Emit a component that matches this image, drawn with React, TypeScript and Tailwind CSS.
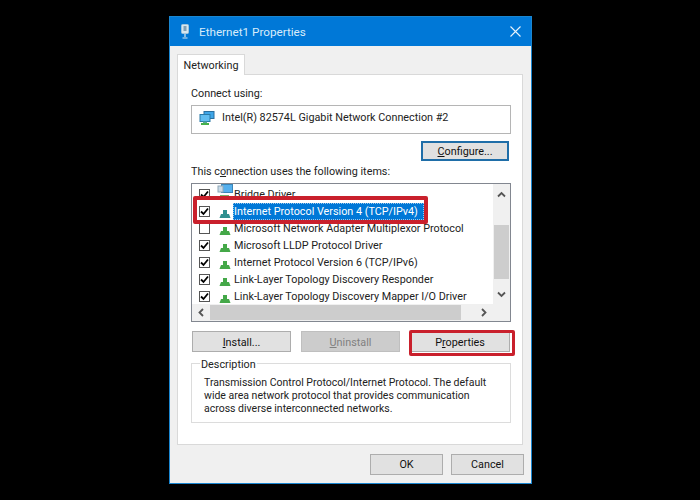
import React from "react";

const items = [
  { label: "Bridge Driver", checked: true, bridge: true },
  { label: "Internet Protocol Version 4 (TCP/IPv4)", checked: true, selected: true },
  { label: "Microsoft Network Adapter Multiplexor Protocol", checked: false },
  { label: "Microsoft LLDP Protocol Driver", checked: true },
  { label: "Internet Protocol Version 6 (TCP/IPv6)", checked: true },
  { label: "Link-Layer Topology Discovery Responder", checked: true },
  { label: "Link-Layer Topology Discovery Mapper I/O Driver", checked: true },
];

function Check({ checked }: { checked: boolean }) {
  return (
    <span className="w-[11px] h-[11px] border border-[#555] bg-white flex items-center justify-center shrink-0">
      {checked && (
        <svg width="9" height="9" viewBox="0 0 9 9">
          <path d="M1 4.5 L3.5 7 L8 1.5" fill="none" stroke="#000" strokeWidth="1.8" />
        </svg>
      )}
    </span>
  );
}

function Monitors() {
  return (
    <svg width="16" height="14" viewBox="0 0 16 14" className="shrink-0">
      <rect x="5" y="0.5" width="10" height="7" fill="#3fa6e8" stroke="#2a6f9f" />
      <rect x="1" y="3.5" width="10" height="7" fill="#62bdf0" stroke="#2a7aa8" />
      <rect x="4" y="10.5" width="4" height="1.5" fill="#5a9" />
      <rect x="2" y="12" width="8" height="2" fill="#46b04a" />
    </svg>
  );
}

function NetIcon({ selected }: { selected?: boolean }) {
  const color = selected ? "#2f8f8f" : "#44a848";
  return (
    <svg width="14" height="17" viewBox="0 0 14 17" className="shrink-0">
      <rect x="5" y="7" width="4" height="4" fill={color} />
      <path d="M1.5 15 L3 11 H11 L12.5 15 Z" fill={color} />
    </svg>
  );
}

function Btn({ children, className = "" }: { children: React.ReactNode; className?: string }) {
  return (
    <div className={`h-[21px] flex items-center justify-center border border-[#adadad] bg-[#e1e1e1] text-[#111] ${className}`}>
      {children}
    </div>
  );
}

function Arrow({ d }: { d: string }) {
  return (
    <svg width="9" height="9" viewBox="0 0 9 9">
      <path d={d} fill="none" stroke="#555" strokeWidth="1.8" />
    </svg>
  );
}

export default function App() {
  return (
    <div className="w-[700px] h-[500px] bg-black pl-[169px] pt-[16px] text-[10.8px] leading-[13px] text-[#222] font-[Roboto,sans-serif]">
      <div className="w-[363px] h-[468px] border border-[#1a86d0] bg-[#f0f0f0] flex flex-col">
        {/* title bar */}
        <div className="h-[29px] bg-[#0078d7] flex items-center shrink-0 pl-[10px] pr-[10px]">
          <svg width="10" height="15" viewBox="0 0 10 15" className="shrink-0">
            <rect x="1.5" y="0.5" width="7" height="9" rx="1" fill="#d8e6ee" stroke="#9fc4dc" />
            <rect x="3.5" y="2" width="3" height="5" fill="#7f9fb5" />
            <path d="M5 10 V13 M2.5 14 H7.5" stroke="#d8e6ee" strokeWidth="1.2" />
          </svg>
          <span className="ml-[9px] mt-[1px] text-[11.7px] text-[#d9ecfa]">Ethernet1 Properties</span>
          <svg width="11" height="11" viewBox="0 0 11 11" className="ml-auto">
            <path d="M0.5 0.5 L10.5 10.5 M10.5 0.5 L0.5 10.5" stroke="#e8f3fb" strokeWidth="1.1" />
          </svg>
        </div>

        <div className="flex-1 pl-[7px] pt-[8px] relative">
          {/* tab */}
          <div className="w-[68px] h-[21px] border border-b-0 border-[#d9d9d9] bg-white flex items-center justify-center relative z-10 -mb-px">
            Networking
          </div>

          {/* tab panel */}
          <div className="w-[346px] h-[371px] border border-[#d9d9d9] bg-white pl-[13px] pt-[12px] relative">
            <div className="h-[13px]">Connect using:</div>
            <div className="mt-[5px] w-[320px] h-[29px] border border-[#b5b5b5] flex items-center pl-[7px] pb-[3px]">
              <Monitors />
              <span className="ml-[7px] mb-[2px]">Intel(R) 82574L Gigabit Network Connection #2</span>
            </div>
            <div className="mt-[7px] w-[320px] flex justify-end pr-[2px]">
              <Btn className="w-[88px] !h-[20px] border-2 !border-[#1f6ea8]"><span><u>C</u>onfigure...</span></Btn>
            </div>
            <div className="mt-[4px] h-[13px]">This c<u>o</u>nnection uses the following items:</div>

            {/* items list */}
            <div className="mt-[5px] w-[320px] h-[139px] border border-[#828790] relative overflow-hidden pt-[2px]">
              {items.map((it) => (
                <div key={it.label} className="h-[17px] flex items-center pl-[7px]">
                  <Check checked={it.checked} />
                  <span className="w-[14px] ml-[8px] shrink-0">{!it.bridge && <NetIcon selected={it.selected} />}</span>
                  <span className={`ml-[1px] h-[17px] flex items-center pl-[1px] whitespace-nowrap ${it.selected ? "pr-[6px] bg-[#0078d7] text-white outline-1 outline-dotted outline-[#9cc8ea] -outline-offset-1" : ""}`}>
                    {it.label}
                  </span>
                </div>
              ))}
              {/* bridge icon sits over the first row */}
              <div className="absolute left-[25px] top-0">
                <svg width="16" height="13" viewBox="0 0 16 13">
                  <rect x="4.5" y="0.5" width="11" height="8" fill="#54b0ee" stroke="#3a85b8" />
                  <rect x="1" y="2" width="5" height="6" fill="#c9dbe8" stroke="#8fa8b8" />
                  <path d="M3 12 H12" stroke="#7fb16a" strokeWidth="2" />
                </svg>
              </div>

              {/* vertical scrollbar */}
              <div className="absolute right-0 top-0 w-[17px] h-full bg-[#f0f0f0] flex flex-col items-center">
                <div className="h-[17px] mt-[2px] flex items-center"><Arrow d="M1 6.5 L4.5 3 L8 6.5" /></div>
                <div className="w-[15px] h-[54px] mt-[22px] bg-[#cdcdcd]" />
                <div className="h-[17px] mt-[7px] flex items-center"><Arrow d="M1 2.5 L4.5 6 L8 2.5" /></div>
              </div>

              {/* horizontal scrollbar */}
              <div className="absolute left-0 bottom-0 w-full h-[17px] bg-[#f0f0f0] flex items-center pl-[5px]">
                <Arrow d="M6 1 L2.5 4.5 L6 8" />
                <div className="w-[251px] h-[15px] ml-[4px] bg-[#cdcdcd]" />
                <div className="ml-[18px]"><Arrow d="M3 1 L6.5 4.5 L3 8" /></div>
              </div>
            </div>

            {/* action buttons */}
            <div className="mt-[9px] w-[320px] flex pl-[1px] gap-[10px]">
              <Btn className="w-[99px] pt-[1px]"><span><u>I</u>nstall...</span></Btn>
              <Btn className="w-[99px] pt-[1px] !bg-[#cccccc] !border-[#bfbfbf] !text-[#808080]"><span><u>U</u>ninstall</span></Btn>
              <Btn className="w-[100px] pt-[1px]"><span>P<u>r</u>operties</span></Btn>
            </div>

            {/* description group */}
            <div className="mt-[11px] w-[320px] h-[60px] border border-[#dcdcdc] relative pt-[12px] pl-[12px] text-[10.5px] leading-[13px] whitespace-nowrap">
              <span className="absolute left-[8px] -top-[6px] bg-white px-[1px] text-[10.8px]">Description</span>
              <div>Transmission Control Protocol/Internet Protocol. The default</div>
              <div>wide area network protocol that provides communication</div>
              <div>across diverse interconnected networks.</div>
            </div>

            {/* red highlights */}
            <div className="absolute left-[15px] top-[121px] w-[235px] h-[28px] border-[4px] border-[#c9202c] rounded-[2px]" />
            <div className="absolute left-[231px] top-[255px] w-[106px] h-[26px] border-[3px] border-[#c9202c] rounded-[2px]" />
          </div>

          {/* dialog buttons */}
          <div className="mt-[9px] w-[347px] flex justify-end gap-[8px]">
            <Btn className="w-[73px]">OK</Btn>
            <Btn className="w-[73px]">Cancel</Btn>
          </div>
        </div>
      </div>
    </div>
  );
}
